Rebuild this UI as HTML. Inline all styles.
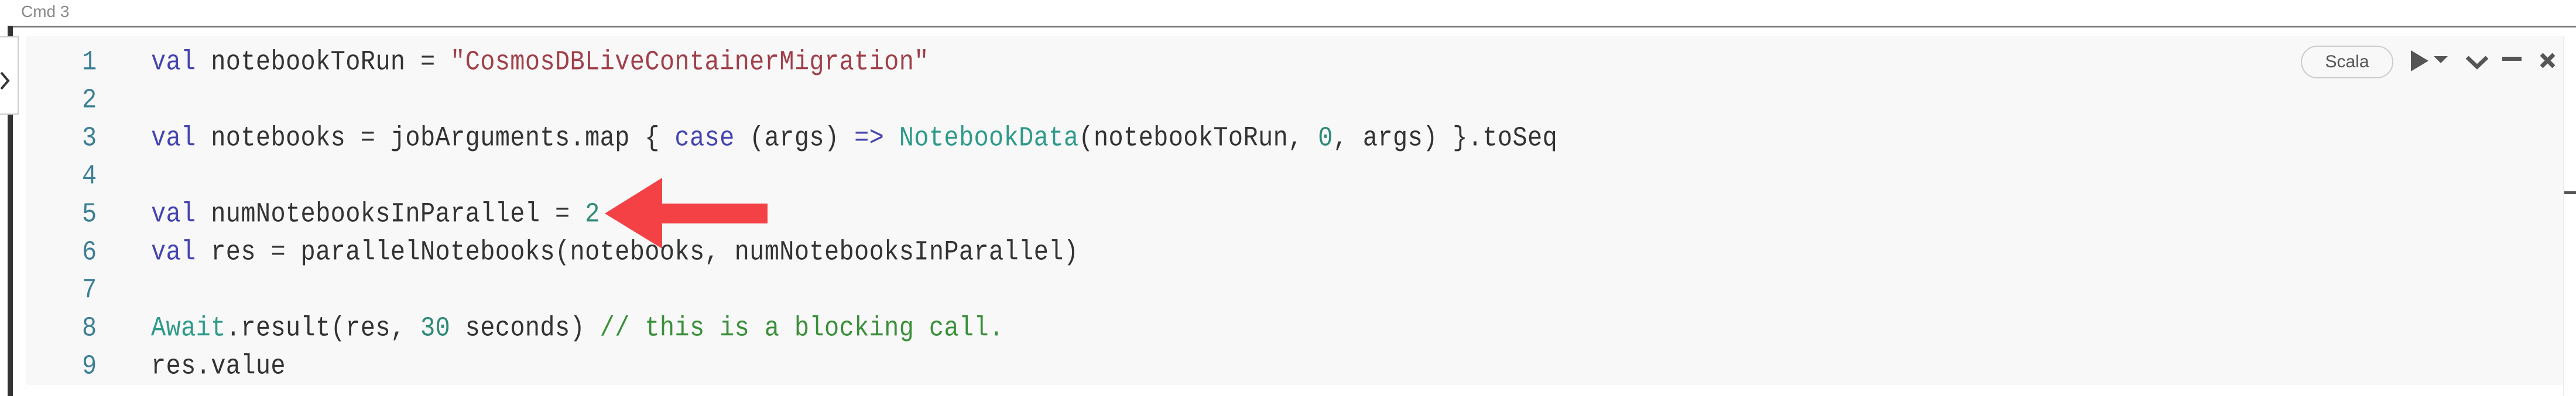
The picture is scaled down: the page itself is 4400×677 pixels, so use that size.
<!DOCTYPE html>
<html><head><meta charset="utf-8"><style>
html,body{margin:0;padding:0;width:4400px;height:677px;background:#fff;overflow:hidden;position:relative;font-family:"Liberation Mono",monospace}
.cmd{position:absolute;left:36px;top:4px;font:28px "Liberation Sans",sans-serif;color:#888}
.top{position:absolute;left:20px;top:44px;width:4380px;height:3px;background:#7a7a7a}
.lbar{position:absolute;left:13px;top:44px;width:9px;height:633px;background:#333}
.tab{position:absolute;left:0;top:62px;width:32px;height:134px;background:#fff;border:2px solid #ccc;border-left:none;box-sizing:border-box}
.bg{position:absolute;left:44px;top:62px;width:4334px;height:596px;background:#f8f8f8}
.rline{position:absolute;left:4378px;top:62px;width:2px;height:615px;background:#eee}
.code{position:absolute;left:0;top:74px;font-size:42px;line-height:65px;white-space:pre;color:#333;letter-spacing:0.35px}
.code div{transform:scaleY(1.12);transform-origin:50% 50%}
.ln{position:absolute;left:140px;width:40px;color:#3d7f96}
.tx{position:absolute;left:258px}
.k{color:#4545b0}.s{color:#a0404a}.n{color:#2e8a78}.c{color:#3d9a6e}.t{color:#2f9a8a}.cm{color:#3b8f3b}
.pill{position:absolute;left:3930px;top:78px;width:158px;height:56px;border:2px solid #ccc;border-radius:28px;box-sizing:border-box;font:30px "Liberation Sans",sans-serif;color:#555;text-align:center;line-height:52px}
</style></head><body>
<div class="cmd">Cmd 3</div>
<div class="top"></div>
<div class="bg"></div>
<div class="rline"></div>
<div class="lbar"></div>
<div class="tab"></div>
<svg style="position:absolute;left:0;top:118px" width="20" height="40"><path d="M2 6 L14 20 L2 34" stroke="#333" stroke-width="4" fill="none"/></svg>
<div class="code">
<div class="ln" style="top:0">1</div><div class="tx" style="top:0"><span class="k">val</span> notebookToRun = <span class="s">"CosmosDBLiveContainerMigration"</span></div>
<div class="ln" style="top:65px">2</div>
<div class="ln" style="top:130px">3</div><div class="tx" style="top:130px"><span class="k">val</span> notebooks = jobArguments.map { <span class="k">case</span> (args) <span class="k">=&gt;</span> <span class="t">NotebookData</span>(notebookToRun, <span class="n">0</span>, args) }.toSeq</div>
<div class="ln" style="top:195px">4</div>
<div class="ln" style="top:260px">5</div><div class="tx" style="top:260px"><span class="k">val</span> numNotebooksInParallel = <span class="n">2</span></div>
<div class="ln" style="top:325px">6</div><div class="tx" style="top:325px"><span class="k">val</span> res = parallelNotebooks(notebooks, numNotebooksInParallel)</div>
<div class="ln" style="top:390px">7</div>
<div class="ln" style="top:455px">8</div><div class="tx" style="top:455px"><span class="t">Await</span>.result(res, <span class="n">30</span> seconds) <span class="cm">// this is a blocking call.</span></div>
<div class="ln" style="top:520px">9</div><div class="tx" style="top:520px">res.value</div>
</div>
<svg style="position:absolute;left:0;top:0" width="4400" height="677">
<polygon points="1033,365 1131,304 1131,348 1311,348 1311,382 1131,382 1131,425" fill="#f44146"/>
<polygon points="4118,86 4148,104 4118,122" fill="#555"/>
<polygon points="4157,96 4181,96 4169,108" fill="#555"/>
<path d="M4214 98 L4231 114 L4248 98" stroke="#555" stroke-width="7" fill="none"/>
<rect x="4274" y="97" width="33" height="7" fill="#555"/>
<path d="M4341 93 L4362 114 M4362 93 L4341 114" stroke="#555" stroke-width="7"/>
<rect x="4380" y="327" width="20" height="5" fill="#555"/>
</svg>
<div class="pill">Scala</div>
</body></html>
